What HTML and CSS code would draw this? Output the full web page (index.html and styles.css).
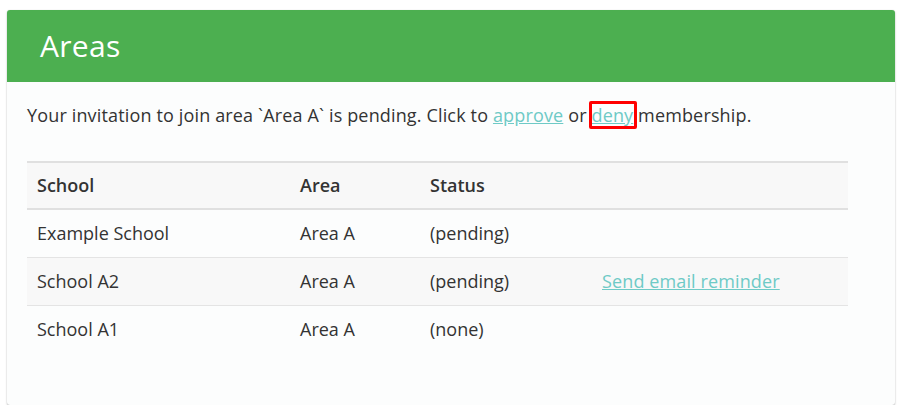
FILE: index.html
```html
<!DOCTYPE html>
<html>
<head>
<meta charset="utf-8">
<link rel="stylesheet" href="styles.css">
</head>
<body>
<div class="card">
  <div class="card-header"><h1>Areas</h1></div>
  <div class="card-body">
    <p class="notice">Your invitation to join area `Area A` is pending. Click to <a href="#">approve</a> or <a href="#" class="hl">deny</a> membership.</p>
    <table class="tbl">
      <thead>
        <tr><th class="c1">School</th><th class="c2">Area</th><th class="c3">Status</th><th class="c4"></th></tr>
      </thead>
      <tbody>
        <tr><td>Example School</td><td>Area A</td><td>(pending)</td><td></td></tr>
        <tr class="striped"><td>School A2</td><td>Area A</td><td>(pending)</td><td><a href="#" class="remind">Send email reminder</a></td></tr>
        <tr><td>School A1</td><td>Area A</td><td>(none)</td><td></td></tr>
      </tbody>
    </table>
  </div>
</div>
</body>
</html>
```
FILE: styles.css
```css
html, body {
  margin: 0;
  padding: 0;
  background: #ffffff;
}
body {
  padding: 10px 7px 0 7px;
  font-family: "Open Sans", "Liberation Sans", sans-serif;
  color: #333;
}
.card {
  width: 888px;
  height: 395px;
  box-sizing: border-box;
  background: #fcfdfd;
  border-radius: 3px;
  box-shadow: 0 1px 2px rgba(0,0,0,0.25), 0 0 1px rgba(0,0,0,0.15);
  overflow: hidden;
}
.card-header {
  background: #4caf50;
  height: 72px;
  display: flex;
  align-items: center;
  padding-left: 33px;
}
.card-header h1 {
  margin: 0;
  color: #fff;
  font-weight: 400;
  font-size: 30px;
  line-height: 1;
  letter-spacing: 0.3px;
  padding-bottom: 1px;
}
.card-body {
  padding: 20px 20px 0 20px;
}
.notice {
  margin: 0 0 33px 0;
  font-size: 18px;
  line-height: 26px;
  letter-spacing: 0.15px;
  color: #333;
}
a {
  color: #6ecac6;
  text-decoration: underline;
}
.hl {
  position: relative;
}
.hl::after {
  content: "";
  position: absolute;
  left: -2px;
  top: -2px;
  width: 42px;
  height: 22px;
  border: 3px solid #ff0000;
  border-radius: 2px;
}
.tbl {
  width: 821px;
  border-collapse: collapse;
  font-size: 18px;
  color: #333;
}
.tbl th, .tbl td {
  text-align: left;
  padding: 0 10px 1px 10px;
  height: 46px;
  vertical-align: middle;
}
.tbl thead tr {
  background: #f8f8f8;
}
.tbl th {
  font-weight: 600;
  border-top: 2px solid #e0e0e0;
  border-bottom: 2px solid #e0e0e0;
  height: 44px;
}
.tbl td {
  border-top: 1px solid #e4e4e4;
}
.tbl tbody tr:first-child td {
  border-top: none;
}
.tbl tr.striped {
  background: #f8f8f8;
}
.remind {
  letter-spacing: 0.12px;
}
.c1 { width: 243px; }
.c2 { width: 110px; }
.c3 { width: 152px; }
```
